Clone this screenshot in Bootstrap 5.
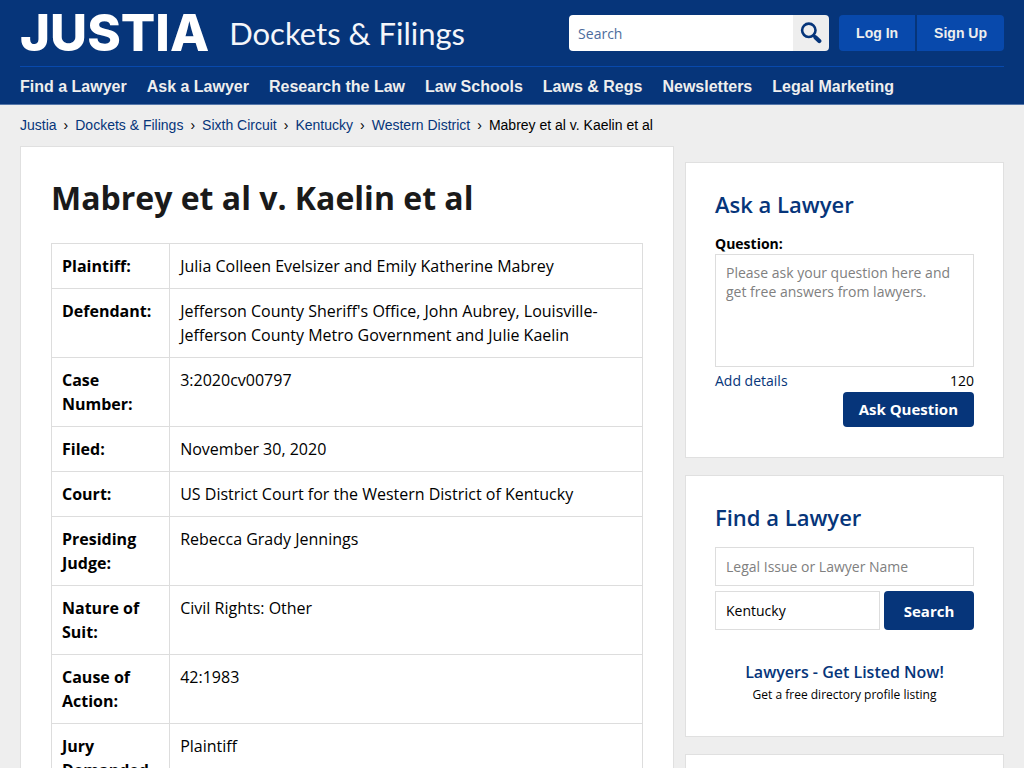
<!DOCTYPE html>
<html lang="en">
<head>
<meta charset="utf-8">
<meta name="viewport" content="width=device-width, initial-scale=1">
<title>Mabrey et al v. Kaelin et al | Justia Dockets &amp; Filings</title>
<link href="https://cdn.jsdelivr.net/npm/bootstrap@5.3.0/dist/css/bootstrap.min.css" rel="stylesheet">
<script src="https://cdn.jsdelivr.net/npm/bootstrap@5.3.0/dist/js/bootstrap.bundle.min.js"></script>
<style>
  :root { --navy: #06357a; --royal: #0849ac; --line: #dddddd; }
  body { font-family: "Open Sans", "Noto Sans", sans-serif; font-size: 16px; line-height: 24px; color: #000; background: #eee; }
  a { color: var(--navy); text-decoration: none; }
  a:hover { text-decoration: underline; }

  .site-header { background: var(--navy); border-bottom: 1px solid #5577aa; padding: 0 20px; }
  .masthead { padding: 15px 0; border-bottom: 1px solid var(--royal); }
  .brand, .brand:hover { color: #fff; text-decoration: none; line-height: 36px; gap: 20px; }
  .brand-name { font-family: Inter, sans-serif; font-weight: 800; font-size: 51px; }
  .brand-section { font-family: Lato, sans-serif; font-size: 31px; color: #f4f6fa; }
  .tools { gap: 10px; }
  .site-search { width: 260px; height: 36px; }
  .site-search input { border: 0; border-radius: 4px 0 0 4px; padding: 0 9px; font-size: 14px; color: var(--navy); min-width: 0; }
  .site-search input::placeholder { color: #4d6c9c; opacity: 1; }
  .site-search button { width: 36px; padding: 0; border: 0; border-radius: 0 4px 4px 0; background: #eee; }
  .account { gap: 2px; }
  .account .btn, .account .btn:hover { background: var(--royal); color: #eee; border: 0; padding: 0 17px; font: 700 14px/36px "Liberation Sans", sans-serif; }
  .account .btn:first-child { border-radius: 4px 0 0 4px; }
  .account .btn:last-child { border-radius: 0 4px 4px 0; }
  .main-links { gap: 20px; padding: 8px 0 5px; font: 700 16px/24px "Liberation Sans", sans-serif; }
  .main-links a { color: #eee; }

  .trail { font: 14px/20px "Liberation Sans", sans-serif; padding: 10px 20px 11px; }
  .trail .breadcrumb-item { padding: 0; color: #000; }
  .trail .breadcrumb-item + .breadcrumb-item::before { content: "›"; color: #000; padding: 0 7px; }

  .layout { padding: 0 20px; gap: 11px; }
  .panel { background: #fff; border: 1px solid #e0e0e0; padding: 30px; }
  .side-column { width: 319px; padding-top: 16px; gap: 17px; }
  .side-column .panel { padding: 29px 29px 30px; }
  .case-title { font-size: 32px; line-height: 42px; font-weight: 700; color: #1a1a1a; margin-bottom: 24px; }
  .case-table { border: 1px solid var(--line); margin: 0; }
  .case-table td, .case-table th { border: 1px solid var(--line); padding: 10px; color: #000; background: #fff; }
  .case-table th { width: 20%; }

  .side-title { font-size: 22px; line-height: 24px; font-weight: 600; color: var(--navy); margin-bottom: 18px; }
  .small-text { font-size: 14px; line-height: 20px; }
  .field { border: 1px solid var(--line); border-radius: 0; padding: 8px 10px; font-size: 14px; line-height: 19px; color: #000; background: #fff; min-width: 0; }
  .field::placeholder { color: #808080; opacity: 1; }
  .question-box { height: 113px; resize: none; }
  .question-foot { padding: 4px 0 1px; }
  .line-field { height: 39px; }
  .lawyer-search { gap: 5px; }
  .action, .action:hover { background: var(--navy); color: #fff; border: 0; border-radius: 4px; font-size: 15px; font-weight: 700; line-height: 20px; }
  .action-ask { padding: 7px 16px 8px; }
  .action-find { width: 90px; height: 39px; padding: 0; }
  .listing { padding-top: 30px; }
  .listed { font-weight: 600; }
  .listed-note { font-size: 12px; line-height: 22px; }
</style>
</head>
<body>
<header class="site-header">
  <div class="masthead d-flex align-items-center">
    <a class="brand d-flex align-items-center me-auto" href="#">
      <span class="brand-name">JUSTIA</span>
      <span class="brand-section">Dockets &amp; Filings</span>
    </a>
    <div class="tools d-flex">
      <form class="site-search d-flex" role="search">
        <input class="form-control" type="text" placeholder="Search" aria-label="Search">
        <button class="flex-shrink-0 d-flex align-items-center justify-content-center" type="button" aria-label="Submit search">
          <svg width="22" height="22" viewBox="0 0 22 22" fill="none" stroke="#06357a" aria-hidden="true"><circle cx="8.800" cy="8.300" r="6.700" stroke-width="2.600"/><path d="M13.400 13.200L15.500 15.300" stroke-width="2.800"/><path d="M15.600 15.400L19.300 19.100" stroke-width="4.200" stroke-linecap="round"/></svg>
        </button>
      </form>
      <div class="account d-flex">
        <button class="btn" type="button">Log In</button>
        <button class="btn" type="button">Sign Up</button>
      </div>
    </div>
  </div>
  <nav class="main-links d-flex flex-wrap" aria-label="Main">
    <a href="#">Find a Lawyer</a>
    <a href="#">Ask a Lawyer</a>
    <a href="#">Research the Law</a>
    <a href="#">Law Schools</a>
    <a href="#">Laws &amp; Regs</a>
    <a href="#">Newsletters</a>
    <a href="#">Legal Marketing</a>
  </nav>
</header>

<nav class="trail" aria-label="Breadcrumb">
  <ol class="breadcrumb mb-0">
    <li class="breadcrumb-item"><a href="#">Justia</a></li>
    <li class="breadcrumb-item"><a href="#">Dockets &amp; Filings</a></li>
    <li class="breadcrumb-item"><a href="#">Sixth Circuit</a></li>
    <li class="breadcrumb-item"><a href="#">Kentucky</a></li>
    <li class="breadcrumb-item"><a href="#">Western District</a></li>
    <li class="breadcrumb-item" aria-current="page">Mabrey et al v. Kaelin et al</li>
  </ol>
</nav>

<div class="layout d-flex">
  <main class="panel flex-fill">
    <h1 class="case-title">Mabrey et al v. Kaelin et al</h1>
    <table class="table case-table">
      <tbody>
        <tr><th scope="row">Plaintiff:</th><td>Julia Colleen Evelsizer and Emily Katherine Mabrey</td></tr>
        <tr><th scope="row">Defendant:</th><td>Jefferson County Sheriff's Office, John Aubrey, Louisville-Jefferson County Metro Government and Julie Kaelin</td></tr>
        <tr><th scope="row">Case Number:</th><td>3:2020cv00797</td></tr>
        <tr><th scope="row">Filed:</th><td>November 30, 2020</td></tr>
        <tr><th scope="row">Court:</th><td>US District Court for the Western District of Kentucky</td></tr>
        <tr><th scope="row">Presiding Judge:</th><td>Rebecca Grady Jennings</td></tr>
        <tr><th scope="row">Nature of Suit:</th><td>Civil Rights: Other</td></tr>
        <tr><th scope="row">Cause of Action:</th><td>42:1983</td></tr>
        <tr><th scope="row">Jury Demanded By:</th><td>Plaintiff</td></tr>
      </tbody>
    </table>
  </main>

  <aside class="side-column d-flex flex-column flex-shrink-0">
    <section class="panel">
      <h2 class="side-title">Ask a Lawyer</h2>
      <form>
        <label class="small-text fw-bold d-block" for="question">Question:</label>
        <textarea class="field question-box d-block w-100" id="question" placeholder="Please ask your question here and get free answers from lawyers."></textarea>
        <div class="question-foot small-text d-flex justify-content-between">
          <a href="#">Add details</a>
          <span>120</span>
        </div>
        <div class="d-flex justify-content-end">
          <button class="btn action action-ask" type="button">Ask Question</button>
        </div>
      </form>
    </section>

    <section class="panel">
      <h2 class="side-title">Find a Lawyer</h2>
      <form class="lawyer-search d-flex flex-column">
        <input class="field line-field w-100" type="text" placeholder="Legal Issue or Lawyer Name" aria-label="Legal issue or lawyer name">
        <div class="d-flex gap-1">
          <input class="field line-field flex-fill" type="text" value="Kentucky" aria-label="Location">
          <button class="btn action action-find flex-shrink-0" type="button">Search</button>
        </div>
      </form>
      <div class="listing text-center">
        <a class="listed d-block" href="#">Lawyers - Get Listed Now!</a>
        <div class="listed-note">Get a free directory profile listing</div>
      </div>
    </section>

    <section class="panel"></section>
  </aside>
</div>
</body>
</html>
